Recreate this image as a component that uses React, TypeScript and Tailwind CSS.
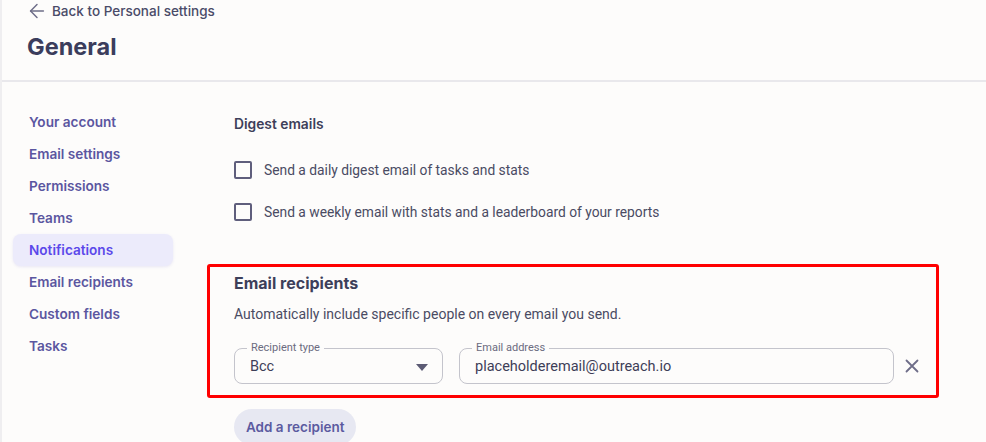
const navItems = ['Your account', 'Email settings', 'Permissions', 'Teams', 'Notifications', 'Email recipients', 'Custom fields', 'Tasks'];

function Checkbox({ label }: { label: string }) {
  return (
    <label className="flex items-center gap-3 h-[20px]">
      <span className="w-[18px] h-[18px] rounded-[2px] border-2 border-[#5f5e7c] shrink-0" />
      <span className="text-[13.8px] text-[#4a4b63]">{label}</span>
    </label>
  );
}

function OutlinedField({ label, value, className, children }: { label: string; value: string; className?: string; children?: React.ReactNode }) {
  return (
    <div className={`relative h-[36px] rounded-lg border border-[#c4c4cc] pl-[15px] flex items-center shrink-0 ${className ?? ''}`}>
      <span className="absolute left-[12px] -top-[8px] px-[4px] bg-[#fdfcfb] text-[11px] leading-[14px] text-[#6b6b80]">{label}</span>
      <span className="text-[14.5px] leading-[20px] text-[#3d3e58] mt-[1px]">{value}</span>
      {children}
    </div>
  );
}

export default function App() {
  return (
    <div className="w-[986px] h-[442px] overflow-hidden bg-[#fdfcfb] border-l-2 border-[#efeef0] font-['Roboto',sans-serif]">
      <header className="h-[82px] border-b-2 border-[#e9e8ec] pl-[24px]">
        <div className="flex items-center gap-[4px] h-[22px] text-[#4a4b68]">
          <svg width="22" height="22" viewBox="0 0 24 24" fill="none" stroke="#6e6d88" strokeWidth="1.6" strokeLinecap="round" strokeLinejoin="round">
            <path d="m12 19-7-7 7-7" />
            <path d="M19 12H5" />
          </svg>
          <span className="font-['Inter',sans-serif] text-[13.5px] font-medium">Back to Personal settings</span>
        </div>
        <h1 className="mt-[10px] ml-[1px] font-['Inter',sans-serif] text-[23.5px] font-bold text-[#3b3d5c] leading-[30px]">General</h1>
      </header>

      <div className="flex">
        <nav className="w-[205px] pl-[11px] pt-[24px] shrink-0">
          <ul className="w-[160px] flex flex-col">
            {navItems.map(item => (
              <li
                key={item}
                className={`h-[32px] flex items-center pl-[16px] rounded-lg font-['Inter',sans-serif] text-[13.6px] font-semibold ${
                  item === 'Notifications' ? 'bg-[#ecebfb] text-[#5b48ea] shadow-[0_1px_3px_rgba(90,80,200,0.12)]' : 'text-[#5b56a0]'
                }`}
              >
                {item}
              </li>
            ))}
          </ul>
        </nav>

        <main className="w-[732px] shrink-0">
          <section className="px-[27px] pt-[32px]">
            <h2 className="font-['Inter',sans-serif] text-[13.8px] font-semibold text-[#3d3f5a] leading-[20px]">Digest emails</h2>
            <div className="mt-[26px] flex flex-col gap-[22px]">
              <Checkbox label="Send a daily digest email of tasks and stats" />
              <Checkbox label="Send a weekly email with stats and a leaderboard of your reports" />
            </div>
          </section>

          <section className="mt-[42px] border-[3px] border-[#ff0000] rounded-[3px] px-[24px] pt-[4px] pb-[11px]">
            <h2 className="font-['Inter',sans-serif] text-[16px] font-bold text-[#3d3f5a] leading-[24px]">Email recipients</h2>
            <p className="mt-[9px] text-[14px] text-[#4a4b63] leading-[20px]">Automatically include specific people on every email you send.</p>
            <div className="mt-[24px] flex items-center gap-[16px]">
              <OutlinedField label="Recipient type" value="Bcc" className="w-[209px]">
                <span className="absolute right-[14px] top-[15px] w-0 h-0 border-l-[6px] border-r-[6px] border-t-[7px] border-l-transparent border-r-transparent border-t-[#5c5b74]" />
              </OutlinedField>
              <OutlinedField label="Email address" value="placeholderemail@outreach.io" className="w-[435px]" />
              <svg width="14" height="14" viewBox="0 0 14 14" fill="none" stroke="#6e6d88" strokeWidth="1.8" strokeLinecap="round" className="-ml-[5px] shrink-0">
                <path d="M1.5 1.5l11 11M12.5 1.5l-11 11" />
              </svg>
            </div>
          </section>

          <div className="px-[27px] mt-[11px]">
            <button className="h-[36px] px-[12px] rounded-full bg-[#e7e8f2] font-['Inter',sans-serif] text-[13.5px] font-semibold text-[#5b5aa0]">
              Add a recipient
            </button>
          </div>
        </main>
      </div>
    </div>
  );
}
